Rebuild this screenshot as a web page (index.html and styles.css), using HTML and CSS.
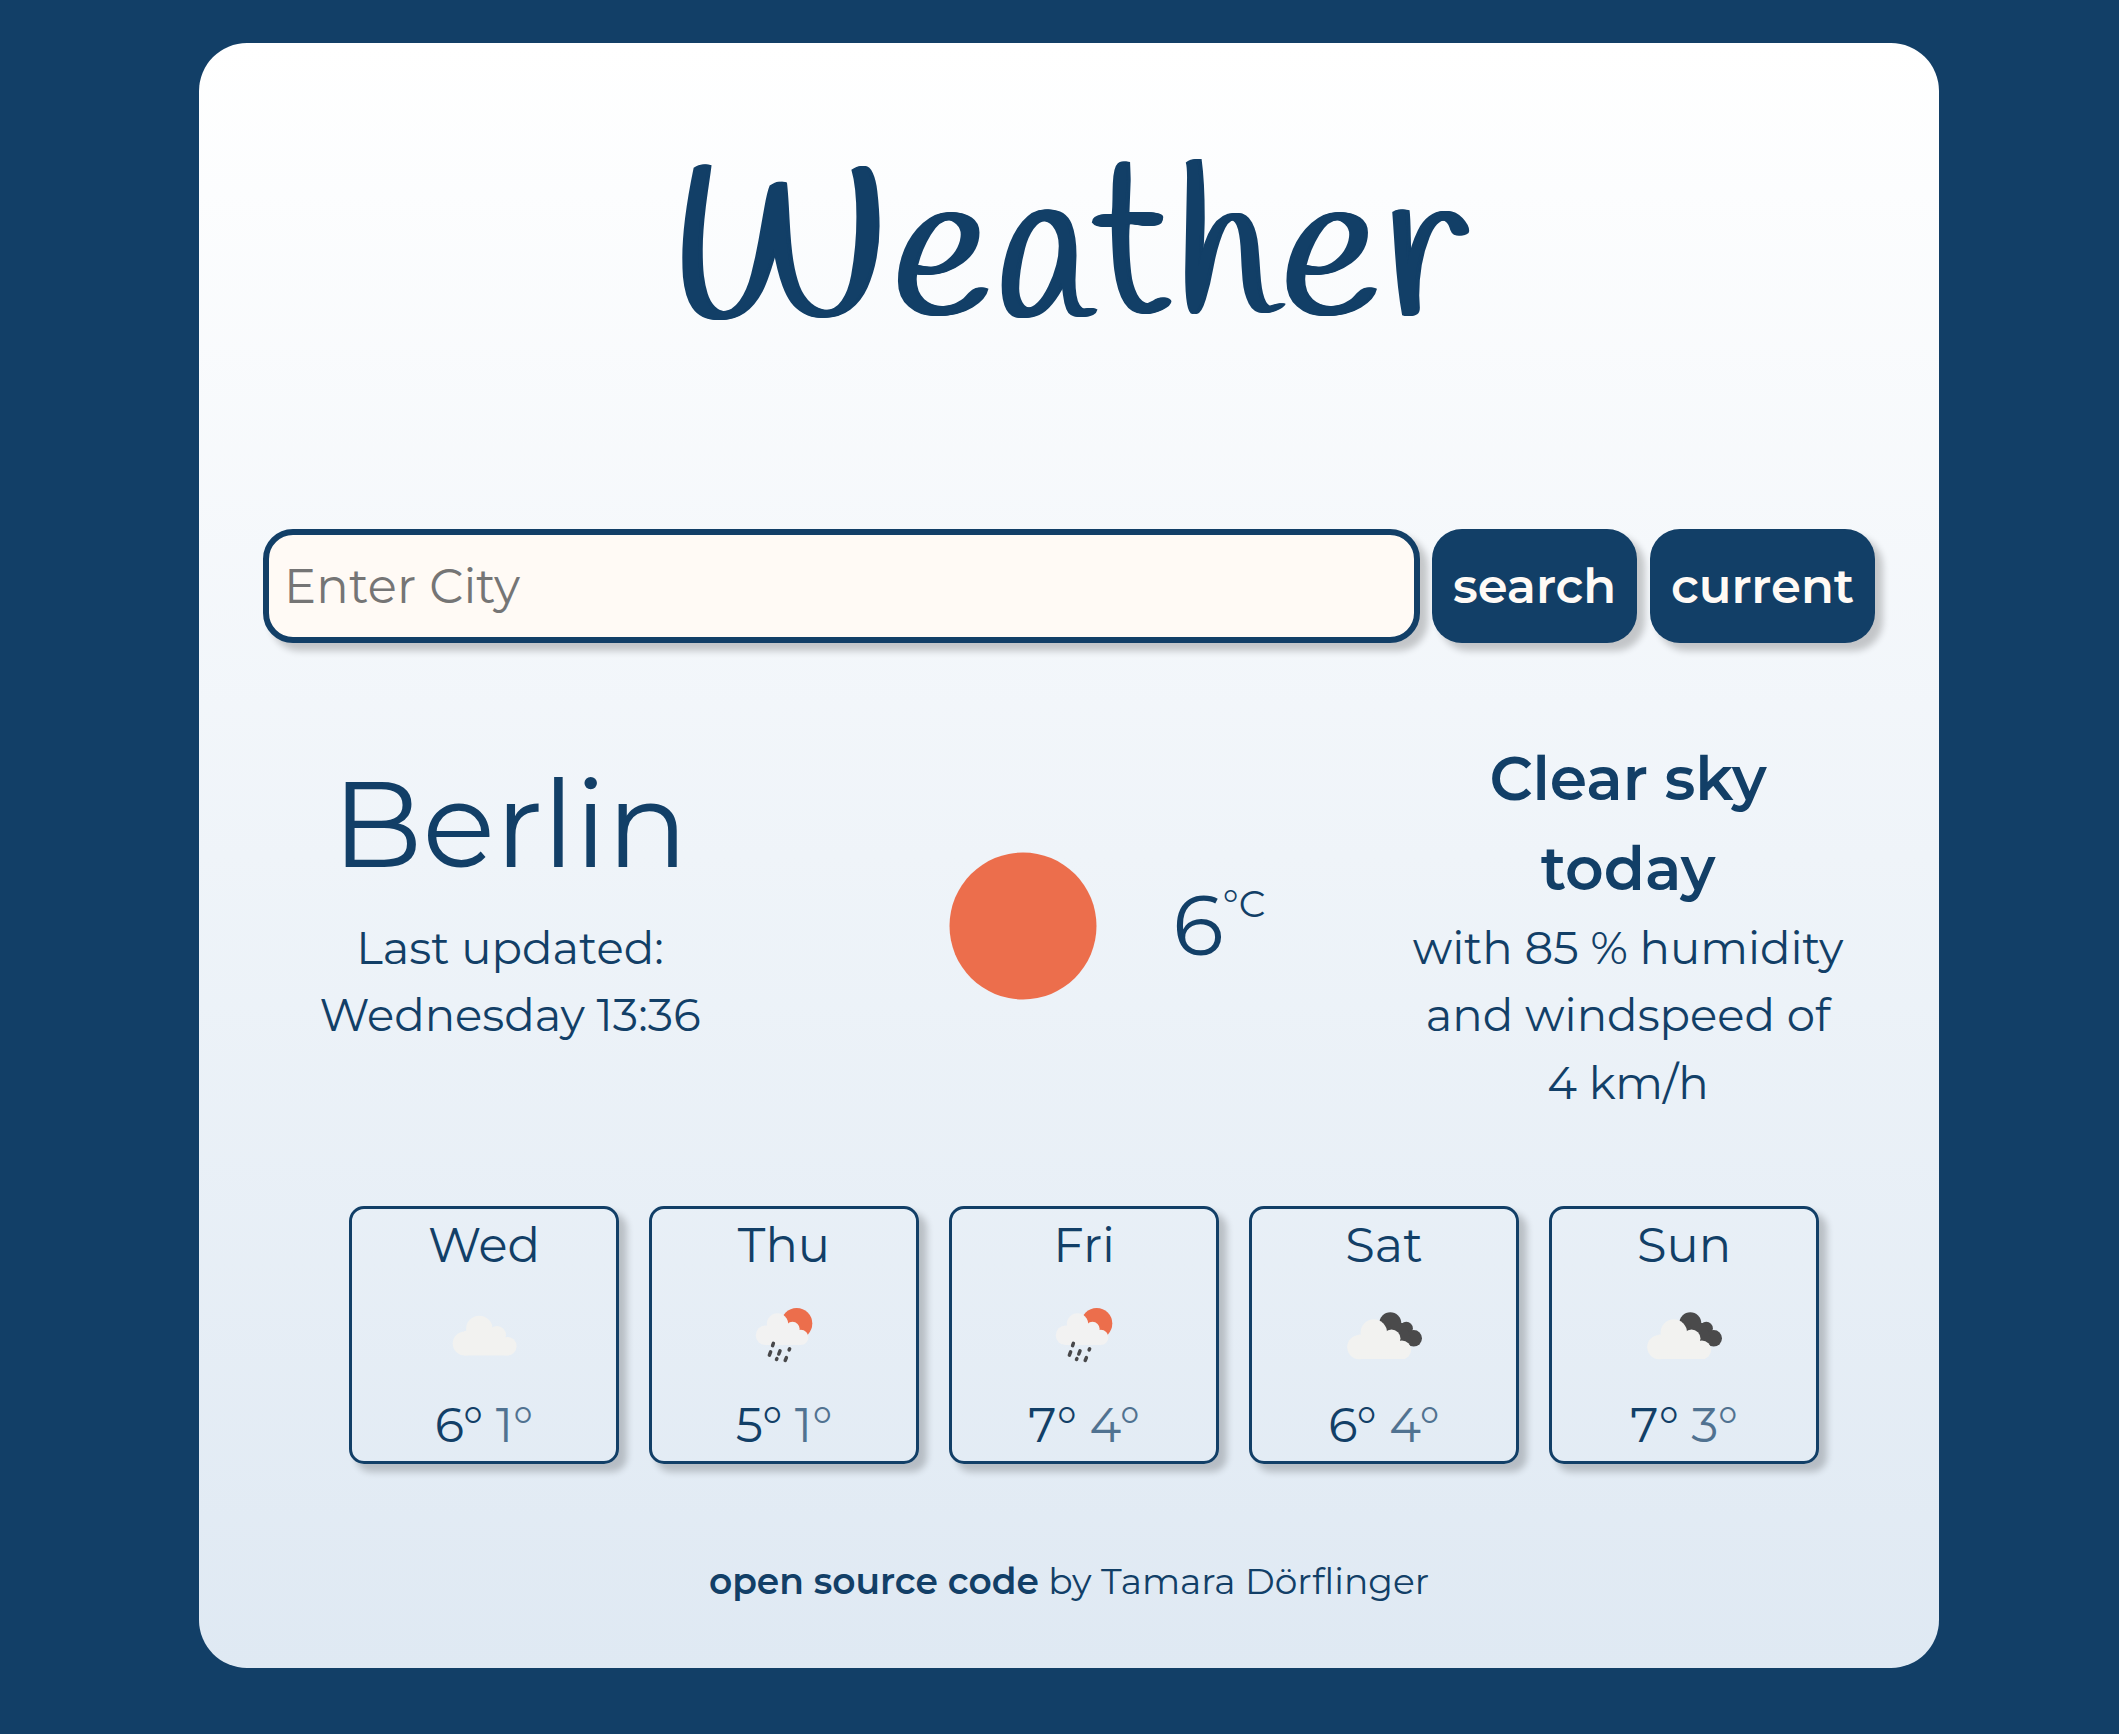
FILE: index.html
```html
<!DOCTYPE html>
<html lang="en">
<head>
<meta charset="utf-8">
<title>Weather</title>
<link rel="stylesheet" href="styles.css">
</head>
<body>
<svg width="0" height="0" class="defs">
  <symbol id="cloud" viewBox="0 0 108 108">
    <g fill="#f2f2f0"><circle cx="49.3" cy="47.9" r="13.2"/><circle cx="67" cy="54" r="9"/><circle cx="77.3" cy="65.2" r="9.3"/><circle cx="34.8" cy="62.5" r="12.1"/><path d="M34 50h33l10 10v14.5H34z"/></g>
  </symbol>
  <symbol id="clouds" viewBox="0 0 108 108">
    <g fill="#4a4a4b"><circle cx="60.3" cy="42.3" r="11"/><circle cx="76.3" cy="47.3" r="6.6"/><circle cx="83.7" cy="57.3" r="8.3"/><path d="M60 42l15 0 8 20-12 4z"/></g>
    <use href="#cloud" x="-5.5" y="3.6" width="108" height="108"/>
  </symbol>
  <symbol id="rain" viewBox="0 0 108 108">
    <circle cx="66.7" cy="42.6" r="15.6" fill="#ec6e4c"/>
    <g fill="#f2f2f2"><circle cx="47.5" cy="43" r="10.7"/><circle cx="62.5" cy="48" r="7.2"/><circle cx="70.8" cy="56.4" r="7.6"/><circle cx="35.6" cy="54.2" r="9.8"/><path d="M35 45h28l8 8v11H35z"/></g>
    <path d="M43.4 62.3l-.8 2.3M40.6 70.8l-1.2 3.3M50 69.8l-1.2 3.2M59.6 67.9l-.5 1M46.9 77.6l-.4.9M56.4 76.6l-1.2 2.9" stroke="#48484a" stroke-width="3.5" stroke-linecap="round"/>
  </symbol>
</svg>
<main class="card">
  <h1 class="title">Weather</h1>
  <form class="search">
    <input class="search-input" type="text" placeholder="Enter City">
    <button class="btn btn-search" type="button">search</button>
    <button class="btn btn-current" type="button">current</button>
  </form>
  <section class="info">
    <div class="place">
      <h2 class="city">Berlin</h2>
      <p class="text">Last updated:<br>Wednesday 13:36</p>
    </div>
    <div class="now">
      <svg class="sun" viewBox="0 0 148 148"><circle cx="74" cy="74" r="73.5" fill="#ec6e4c"/></svg>
      <div class="temp">6<sup class="unit">°C</sup></div>
    </div>
    <div class="sky">
      <h3 class="desc">Clear sky<br>today</h3>
      <p class="text">with 85 % humidity<br>and windspeed of<br>4 km/h</p>
    </div>
  </section>
  <section class="forecast">
    <article class="day"><div class="name">Wed</div><svg class="icon"><use href="#cloud"/></svg><div class="range">6° <span class="low">1°</span></div></article>
    <article class="day"><div class="name">Thu</div><svg class="icon"><use href="#rain"/></svg><div class="range">5° <span class="low">1°</span></div></article>
    <article class="day"><div class="name">Fri</div><svg class="icon"><use href="#rain"/></svg><div class="range">7° <span class="low">4°</span></div></article>
    <article class="day"><div class="name">Sat</div><svg class="icon"><use href="#clouds"/></svg><div class="range">6° <span class="low">4°</span></div></article>
    <article class="day"><div class="name">Sun</div><svg class="icon"><use href="#clouds"/></svg><div class="range">7° <span class="low">3°</span></div></article>
  </section>
  <footer class="footer"><b class="link">open source code</b> by Tamara Dörflinger</footer>
</main>
</body>
</html>
```
FILE: styles.css
```css
* { box-sizing: border-box; margin: 0; }
body {
  background: #123f67;
  color: #123f67;
  font-family: Montserrat, Inter, sans-serif;
  font-weight: 400;
  display: flow-root;
}
.defs { position: absolute; }
.card {
  width: 1740px;
  margin: 43px 0 0 199px;
  padding: 64px 64px 60px;
  border-radius: 48px;
  background: linear-gradient(to top, #dfe9f3, #fff);
}
/* Handlee has no bold face: thicken the strokes sideways only */
.title {
  font: 400 210px/307px Handlee, cursive;
  letter-spacing: 4.3px;
  text-shadow: 1.5px 0, 3px 0, 4.3px 0;
  text-align: center;
}
.search { display: flex; gap: 12px; margin-top: 115px; height: 114px; }
.search-input, .btn {
  font: inherit;
  font-size: 48px;
  border-radius: 30px;
  box-shadow: 7.5px 7.5px 7.5px rgba(0, 0, 0, .2);
}
.search-input {
  flex: 1;
  min-width: 0;
  border: 6px solid #123f67;
  background: #fffaf5;
  padding: 0 15px;
  letter-spacing: .2px;
}
.search-input::placeholder { color: #757575; }
.btn { border: 0; padding: 0; background: #123f67; color: #fffaf5; font-weight: 600; }
.btn-search { width: 205px; margin-right: 1px; }
.btn-current { width: 225px; }
.info { display: grid; grid-template-columns: 494px 1fr 494px; margin-top: 91px; text-align: center; }
.text { font-size: 45px; line-height: 67.5px; margin: -.4px 0 .4px; }
.place { padding-top: 18px; }
.city { font-size: 120px; line-height: 144px; font-weight: 400; }
.place .text { margin-top: 17.6px; }
.now { display: flex; align-items: center; gap: 75.5px; padding-left: 192px; }
.sun { width: 148px; height: 148px; margin-top: 2px; }
.temp { font-size: 84px; line-height: 98px; white-space: nowrap; }
.unit { font-size: 37.5px; line-height: 0; vertical-align: 38px; margin-left: -1px; font-weight: 400; }
.desc { font-size: 60px; line-height: 90px; font-weight: 600; }
.forecast { display: flex; gap: 30px; margin-top: 89.5px; padding-left: 86px; }
.day {
  width: 270px;
  border: 3px solid #123f67;
  border-radius: 15px;
  box-shadow: 7.5px 7.5px 7.5px rgba(0, 0, 0, .2);
  text-align: center;
  font-size: 48px;
  line-height: 72px;
}
.icon { display: block; width: 108px; height: 108px; margin: 0 auto; }
.low { opacity: .7; }
.footer { margin-top: 89.5px; text-align: center; font-size: 36px; line-height: 54px; }
.link { font-weight: 600; }
```
